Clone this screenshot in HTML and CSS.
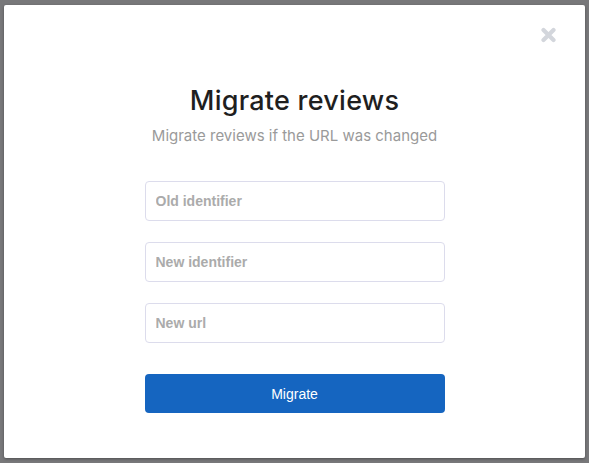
FILE: index.html
```html
<!DOCTYPE html>
<html lang="en">
<head>
<meta charset="utf-8">
<title>Migrate reviews</title>
<link rel="stylesheet" href="styles.css">
</head>
<body>
<div class="backdrop">
  <div class="modal">
    <div class="modal-top">
      <button class="close" aria-label="Close">
        <svg width="15" height="16" viewBox="0 0 15 16"><path d="M2.5 3L12.5 13M12.5 3L2.5 13" stroke="#d3d6dc" stroke-width="4.2" stroke-linecap="round"/></svg>
      </button>
    </div>
    <h1 class="title">Migrate reviews</h1>
    <p class="subtitle">Migrate reviews if the URL was changed</p>
    <form class="form">
      <input class="field" type="text" placeholder="Old identifier">
      <input class="field" type="text" placeholder="New identifier">
      <input class="field" type="text" placeholder="New url">
      <button class="submit" type="button">Migrate</button>
    </form>
  </div>
</div>
</body>
</html>
```
FILE: styles.css
```css
html, body {
  margin: 0;
  padding: 0;
  height: 100%;
}
body {
  background: #78787a;
  font-family: "Inter", "Liberation Sans", sans-serif;
}
.backdrop {
  padding: 5px 4px 0 4px;
  box-sizing: border-box;
  height: 100%;
}
.modal {
  width: 581px;
  height: 453px;
  background: #fff;
  border-radius: 2px;
  box-shadow: 0 1px 3px rgba(0,0,0,0.35);
  box-sizing: border-box;
  display: flex;
  flex-direction: column;
  align-items: center;
}
.modal-top {
  align-self: stretch;
  display: flex;
  justify-content: flex-end;
  padding: 22px 29px 0 0;
  height: 16px;
}
.close {
  border: 0;
  background: none;
  padding: 0;
  width: 15px;
  height: 16px;
  display: flex;
}
.title {
  margin: 40px 0 0 0;
  font-size: 27px;
  font-weight: 500;
  letter-spacing: 0.25px;
  color: #1f1f1f;
  line-height: 36px;
}
.subtitle {
  margin: 7px 0 0 0;
  font-size: 15px;
  color: #9a9a9a;
  line-height: 20px;
}
.form {
  margin-top: 35px;
  width: 300px;
  display: flex;
  flex-direction: column;
  gap: 21px;
}
.field {
  height: 40px;
  box-sizing: border-box;
  border: 1px solid #dcdcec;
  border-radius: 4px;
  padding: 0 10px;
  font-family: "Liberation Sans", Arial, sans-serif;
  font-size: 14px;
  font-weight: bold;
  outline: none;
}
.field::placeholder {
  color: #ababab;
}
.submit {
  margin-top: 10px;
  height: 39px;
  border: 0;
  border-radius: 4px;
  background: #1565c0;
  color: #fff;
  font-family: "Liberation Sans", Arial, sans-serif;
  font-size: 14px;
}
```
